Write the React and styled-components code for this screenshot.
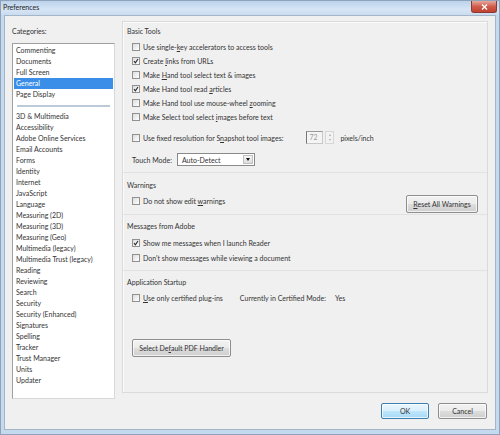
import React from "react";
import styled, { createGlobalStyle } from "styled-components";

const GlobalStyle = createGlobalStyle`
  html, body {
    margin: 0;
    padding: 0;
    background: #f0f0f0;
  }
  body {
    font-family: Lato, "Liberation Sans", sans-serif;
    font-size: 7px;
    color: #333;
  }
`;

const Window = styled.div`
  width: 500px;
  height: 435px;
  box-sizing: border-box;
  display: flex;
  flex-direction: column;
  background: #c6daef;
  border: 1px solid #8ea3ba;
  overflow: hidden;
`;

const TitleBar = styled.div`
  height: 14px;
  display: flex;
  align-items: flex-start;
  justify-content: space-between;
  padding-left: 2px;
  background: linear-gradient(#bcd3ec, #d6e5f5 60%, #cbdcf0);
`;

const Title = styled.span`
  margin-top: 2px;
  font-size: 7px;
  color: #222;
`;

const CloseButton = styled.div`
  width: 26px;
  height: 12px;
  margin-right: 2px;
  box-sizing: border-box;
  border: 1px solid #8a3a32;
  border-top: none;
  border-radius: 0 0 3px 3px;
  background: linear-gradient(#e8a89c, #cf5d4c 50%, #c4402e);
  display: flex;
  align-items: center;
  justify-content: center;
`;

const Client = styled.div`
  flex: 1;
  display: flex;
  flex-direction: column;
  margin: 0 3px 4px 3px;
  background: #f0f0f0;
  border: 1px solid #a4b5c8;
`;

const Main = styled.div`
  display: flex;
  align-items: flex-start;
  padding: 5px 0 0 7px;
  height: 380px;
  box-sizing: border-box;
`;

const LeftColumn = styled.div`
  width: 103px;
  display: flex;
  flex-direction: column;
`;

const Label = styled.div`
  height: 22px;
  display: flex;
  align-items: center;
  padding-bottom: 2px;
  box-sizing: border-box;
`;

const ListBox = styled.div`
  height: 356px;
  box-sizing: border-box;
  background: #fff;
  border: 1px solid #aaa;
  border-color: #a0a0a0 #d8d8d8 #d8d8d8 #a0a0a0;
  padding: 1px 1px;
  display: flex;
  flex-direction: column;
`;

const ListItem = styled.div`
  height: 11px;
  line-height: 11px;
  padding-left: 2px;
  white-space: nowrap;
  background: ${(p) => (p.$selected ? "#3a8ee8" : "transparent")};
  color: ${(p) => (p.$selected ? "#fff" : "#333")};
`;

const ListDivider = styled.div`
  height: 11px;
  display: flex;
  align-items: center;
  padding: 0 3px;
  &::after {
    content: "";
    flex: 1;
    height: 2px;
    background: #bccad8;
  }
`;

const Panel = styled.div`
  width: 366px;
  height: 372px;
  margin-left: 7px;
  box-sizing: border-box;
  border: 1px solid #dadada;
  box-shadow: inset 1px 1px 0 #fbfbfb;
  display: flex;
  flex-direction: column;
`;

const Section = styled.div`
  display: flex;
  flex-direction: column;
  padding: ${(p) => p.$pad || "4px 9px 5px 4px"};
  border-top: ${(p) => (p.$first ? "none" : "1px solid #e2e2e2")};
  flex: ${(p) => (p.$grow ? 1 : "none")};
`;

const SectionTitle = styled.div`
  height: 10px;
  line-height: 10px;
  margin-bottom: 4px;
`;

const Items = styled.div`
  display: flex;
  flex-direction: column;
  padding-left: 5px;
`;

const Row = styled.div`
  display: flex;
  align-items: ${(p) => (p.$top ? "flex-start" : "center")};
  height: ${(p) => p.$h || 14}px;
  margin-top: ${(p) => p.$mt || 0}px;
  justify-content: ${(p) => (p.$spread ? "space-between" : "flex-start")};
`;

const CheckBox = styled.span`
  width: 8px;
  height: 8px;
  box-sizing: border-box;
  border: 1px solid #919191;
  background: linear-gradient(135deg, #dcdcdc, #fff);
  margin-right: 3px;
  display: inline-flex;
  align-items: center;
  justify-content: center;
  flex: none;
`;

const Text = styled.span`
  white-space: nowrap;
  margin-left: ${(p) => p.$ml || 0}px;
`;

const SpinBox = styled.div`
  display: flex;
  align-items: stretch;
  height: 13px;
  margin-left: 23px;
`;

const SpinInput = styled.div`
  width: 17px;
  box-sizing: border-box;
  border: 1px solid #c8c8c8;
  border-left-color: #777;
  border-top-color: #999;
  background: #f4f4f4;
  color: #9a9a9a;
  padding-left: 2px;
  line-height: 11px;
`;

const SpinButtons = styled.div`
  width: 7px;
  margin-left: 2px;
  display: flex;
  flex-direction: column;
  border: 1px solid #d6d6d6;
  background: #f2f2f2;
`;

const SpinArrow = styled.div`
  flex: 1;
  display: flex;
  align-items: center;
  justify-content: center;
  &::after {
    content: "";
    border-left: 1.5px solid transparent;
    border-right: 1.5px solid transparent;
    ${(p) =>
      p.$down ? "border-top: 2px solid #aaa;" : "border-bottom: 2px solid #aaa;"}
  }
`;

const Select = styled.div`
  width: 78px;
  height: 13px;
  margin-left: 5px;
  box-sizing: border-box;
  border: 1px solid #8a8a8a;
  background: #fff;
  display: flex;
  align-items: center;
  padding-left: 4px;
`;

const SelectArrow = styled.div`
  margin-left: auto;
  width: 10px;
  height: 9px;
  margin-right: 1px;
  box-sizing: border-box;
  border: 1px solid #c0c0c0;
  background: linear-gradient(#f6f6f6, #dedede);
  display: flex;
  align-items: center;
  justify-content: center;
  &::after {
    content: "";
    border-left: 2.5px solid transparent;
    border-right: 2.5px solid transparent;
    border-top: 3px solid #111;
  }
`;

const Button = styled.button`
  font: inherit;
  color: #333;
  height: ${(p) => p.$h || 16}px;
  width: ${(p) => p.$w}px;
  margin-top: ${(p) => p.$mt || 0}px;
  padding: 0;
  box-sizing: border-box;
  border: 1px solid ${(p) => (p.$default ? "#3c7fb1" : "#8e8e8e")};
  border-radius: 2px;
  background: ${(p) =>
    p.$default
      ? "linear-gradient(#eaf6fd, #d9f0fc 50%, #bee6fd 51%, #a7d9f5)"
      : "linear-gradient(#f2f2f2, #ebebeb 50%, #dddddd 51%, #cfcfcf)"};
  box-shadow: inset 0 0 0 1px rgba(255, 255, 255, 0.7);
`;

const Spacer = styled.div`
  flex: 1;
`;

const Footer = styled.div`
  display: flex;
  justify-content: flex-end;
  gap: 9px;
  padding: 7px 8px 0 0;
`;

const Check = ({ checked }) => (
  <CheckBox>
    {checked && (
      <svg width="6" height="6" viewBox="0 0 6 6">
        <path d="M1 3.2 L2.4 4.8 L5 1" fill="none" stroke="#2a2a2a" strokeWidth="1.1" />
      </svg>
    )}
  </CheckBox>
);

const CheckRow = ({ checked, children, h, mt }) => (
  <Row $h={h} $mt={mt}>
    <Check checked={checked} />
    <Text>{children}</Text>
  </Row>
);

const categoriesTop = ["Commenting", "Documents", "Full Screen", "General", "Page Display"];
const categoriesBottom = [
  "3D & Multimedia",
  "Accessibility",
  "Adobe Online Services",
  "Email Accounts",
  "Forms",
  "Identity",
  "Internet",
  "JavaScript",
  "Language",
  "Measuring (2D)",
  "Measuring (3D)",
  "Measuring (Geo)",
  "Multimedia (legacy)",
  "Multimedia Trust (legacy)",
  "Reading",
  "Reviewing",
  "Search",
  "Security",
  "Security (Enhanced)",
  "Signatures",
  "Spelling",
  "Tracker",
  "Trust Manager",
  "Units",
  "Updater",
];

export default function App() {
  return (
    <>
      <GlobalStyle />
      <Window>
        <TitleBar>
          <Title>Preferences</Title>
          <CloseButton>
            <svg width="7" height="6" viewBox="0 0 7 6">
              <path d="M1 0.5 L6 5.5 M6 0.5 L1 5.5" stroke="#fff" strokeWidth="1.4" />
            </svg>
          </CloseButton>
        </TitleBar>
        <Client>
          <Main>
            <LeftColumn>
              <Label>Categories:</Label>
              <ListBox>
                {categoriesTop.map((c) => (
                  <ListItem key={c} $selected={c === "General"}>
                    {c}
                  </ListItem>
                ))}
                <ListDivider />
                {categoriesBottom.map((c) => (
                  <ListItem key={c}>{c}</ListItem>
                ))}
              </ListBox>
            </LeftColumn>

            <Panel>
              <Section $first $pad="4px 9px 5px 4px">
                <SectionTitle>Basic Tools</SectionTitle>
                <Items>
                  <CheckRow>
                    Use single-<u>k</u>ey accelerators to access tools
                  </CheckRow>
                  <CheckRow checked>
                    Create <u>l</u>inks from URLs
                  </CheckRow>
                  <CheckRow>
                    Make <u>H</u>and tool select text &amp; images
                  </CheckRow>
                  <CheckRow checked>
                    Make Hand tool read <u>a</u>rticles
                  </CheckRow>
                  <CheckRow>
                    Make Hand tool use mouse-wheel <u>z</u>ooming
                  </CheckRow>
                  <CheckRow>
                    Make Select tool select <u>i</u>mages before text
                  </CheckRow>
                  <Row $h={15} $mt={6}>
                    <Check />
                    <Text>
                      Use fixed resolution for S<u>n</u>apshot tool images:
                    </Text>
                    <SpinBox>
                      <SpinInput>72</SpinInput>
                      <SpinButtons>
                        <SpinArrow />
                        <SpinArrow $down />
                      </SpinButtons>
                    </SpinBox>
                    <Text $ml={6}>pixels/inch</Text>
                  </Row>
                  <Row $h={15} $mt={7}>
                    <Text>Touch Mode:</Text>
                    <Select>
                      <span>Auto-Detect</span>
                      <SelectArrow />
                    </Select>
                  </Row>
                </Items>
              </Section>

              <Section $pad="7px 9px 6px 4px">
                <SectionTitle>Warnings</SectionTitle>
                <Items>
                  <Row $spread $top $h={14}>
                    <Row $h={14}>
                      <Check />
                      <Text>
                        Do not show edit <u>w</u>arnings
                      </Text>
                    </Row>
                    <Button $w={72} $h={18} $mt={1}>
                      <u>R</u>eset All Warnings
                    </Button>
                  </Row>
                </Items>
              </Section>

              <Section $pad="6px 9px 5px 4px">
                <SectionTitle>Messages from Adobe</SectionTitle>
                <Items>
                  <CheckRow checked h={15}>
                    Show me messages when I launch Reader
                  </CheckRow>
                  <CheckRow h={15}>Don't show messages while viewing a document</CheckRow>
                </Items>
              </Section>

              <Section $grow $pad="6px 9px 0 4px">
                <SectionTitle>Application Startup</SectionTitle>
                <Items>
                  <Row $h={14}>
                    <Check />
                    <Text>
                      <u>U</u>se only certified plug-ins
                    </Text>
                    <Text $ml={17}>Currently in Certified Mode:</Text>
                    <Text $ml={9}>Yes</Text>
                  </Row>
                  <Spacer />
                  <Row $h={18} $mt={34}>
                    <Button $w={99} $h={18}>
                      Select De<u>f</u>ault PDF Handler
                    </Button>
                  </Row>
                </Items>
              </Section>
            </Panel>
          </Main>
          <Footer>
            <Button $default $w={48}>
              OK
            </Button>
            <Button $w={49}>Cancel</Button>
          </Footer>
        </Client>
      </Window>
    </>
  );
}
